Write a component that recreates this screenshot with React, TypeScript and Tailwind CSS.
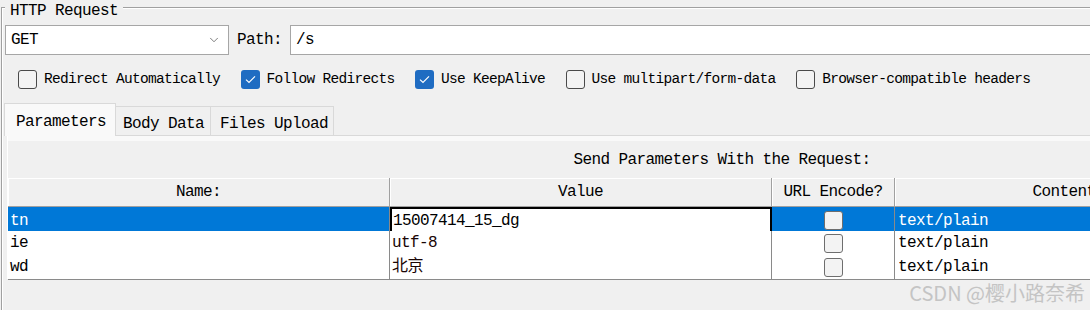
import { ChevronDown } from "lucide-react"

interface Option {
  label: string
  checked: boolean
}

interface Param {
  name: string
  value: string
  editing?: boolean
}

const options: Option[] = [
  { label: "Redirect Automatically", checked: false },
  { label: "Follow Redirects", checked: true },
  { label: "Use KeepAlive", checked: true },
  { label: "Use multipart/form-data", checked: false },
  { label: "Browser-compatible headers", checked: false },
]

const params: Param[] = [
  { name: "tn", value: "15007414_15_dg", editing: true },
  { name: "ie", value: "utf-8" },
  { name: "wd", value: "北京" },
]

const cols = "grid grid-cols-[382px_382px_123px_384px]"
const txt = "text-[16px] tracking-[-0.6px]"

function CheckBox({ checked }: { checked: boolean }) {
  if (checked) {
    return (
      <span className="w-[19px] h-[19px] shrink-0 rounded-[3px] bg-[#1f6cc2] flex items-center justify-center">
        <svg width="11" height="9" viewBox="0 0 11 9">
          <path d="M1 4.6 L4 7.4 L10 1.4" stroke="white" strokeWidth="1.2" fill="none" />
        </svg>
      </span>
    )
  }
  return <span className="w-[19px] h-[19px] shrink-0 rounded-[3px] border border-[#4a4a4a] bg-[#f3f3f3]" />
}

export default function App() {
  return (
    <div className="w-[1090px] h-[310px] overflow-hidden relative bg-[#f0f0f0] text-black font-['Liberation_Mono','Noto_Sans_CJK_SC',monospace]">
      <fieldset className="ml-px w-[1440px] h-[400px] border-t border-l border-[#a0a0a0] shadow-[inset_1px_1px_0_#ffffff] pt-[10px]">
        <legend className={`ml-[3px] px-[5px] ${txt} leading-[12px] pt-[3px] bg-[#f0f0f0]`}>
          <span className="relative top-[2px]">HTTP Request</span>
        </legend>

        {/* method + path */}
        <div className={`flex items-center pl-[3px] h-[30px] ${txt}`}>
          <div className="w-[224px] h-[30px] bg-white border border-[#a6a6a6] flex items-center justify-between pl-[5px] pr-[7px]">
            <span>GET</span>
            <ChevronDown size={14} strokeWidth={1.3} className="text-[#555]" />
          </div>
          <span className="ml-[8px]">Path:</span>
          <div className="ml-[8px] flex-1 h-[30px] bg-white border border-[#a6a6a6] flex items-center pl-[5px]">
            <span>/s</span>
          </div>
        </div>

        {/* options */}
        <div className="flex items-center pl-[16px] mt-[15px] h-[19px] gap-x-[20.5px]">
          {options.map((o) => (
            <div key={o.label} className="flex items-center gap-[7px]">
              <CheckBox checked={o.checked} />
              <span className="text-[14.5px] tracking-[-0.7px] leading-[19px]">{o.label}</span>
            </div>
          ))}
        </div>

        {/* tabs */}
        <div className={`flex items-end ml-[2px] mt-[14px] h-[33px] -mb-px relative z-10 ${txt}`}>
          <div className="w-[112px] h-[33px] bg-[#f9f9f9] border border-b-0 border-[#d9d9d9] pl-[11px] pt-[6px]">Parameters</div>
          <div className="w-[95px] h-[30px] bg-[#f0f0f0] border border-l-0 border-[#d9d9d9] pl-[7px] pt-[5px]">Body Data</div>
          <div className="w-[123px] h-[30px] bg-[#f0f0f0] border border-l-0 border-[#d9d9d9] pl-[9px] pt-[5px]">Files Upload</div>
        </div>

        {/* tab panel */}
        <div className="ml-[5px] w-[1429px] border-t border-l border-t-[#d9d9d9] border-l-white">
          <div className="h-[5px] bg-[#f9f9f9]" />
          <div className={`h-[37px] flex items-center justify-center ${txt}`}>Send Parameters With the Request:</div>

          <div className={`${cols} h-[29px] ${txt}`}>
            {["Name:", "Value", "URL Encode?", "Content-Type"].map((h) => (
              <div
                key={h}
                className="flex items-center justify-center border-r border-b border-[#a0a0a0] shadow-[inset_1px_1px_0_#ffffff] bg-[#f0f0f0]"
              >
                {h}
              </div>
            ))}
          </div>

          {params.map((p) => {
            const sel = !!p.editing
            return (
              <div key={p.name} className={`${cols} h-[24px] ${txt}`}>
                <div className={`flex items-center pl-[2px] border-r border-b border-[#8a8a8a] ${sel ? "bg-[#0078d7] text-white" : "bg-white"}`}>
                  {p.name}
                </div>
                {sel ? (
                  <div className="flex items-center pl-[1px] border-2 border-black bg-white">{p.value}</div>
                ) : (
                  <div className="flex items-center pl-[2px] border-r border-b border-[#8a8a8a] bg-white text-[#1a0505]">{p.value}</div>
                )}
                <div className={`flex items-center justify-center border-r border-b border-[#8a8a8a] ${sel ? "bg-[#0078d7]" : "bg-white"}`}>
                  <span className="w-[19px] h-[19px] rounded-[3px] border border-[#6e6e6e] bg-[#f3f3f3]" />
                </div>
                <div className={`flex items-center pl-[3px] border-r border-b border-[#8a8a8a] ${sel ? "bg-[#0078d7] text-white" : "bg-white"}`}>
                  text/plain
                </div>
              </div>
            )
          })}
        </div>
      </fieldset>

      <span className="absolute right-[5px] bottom-[6px] text-[20px] leading-[22px] text-[#c4c4c4] font-['Noto_Sans_CJK_SC',sans-serif]">
        CSDN @樱小路奈希
      </span>
    </div>
  )
}
